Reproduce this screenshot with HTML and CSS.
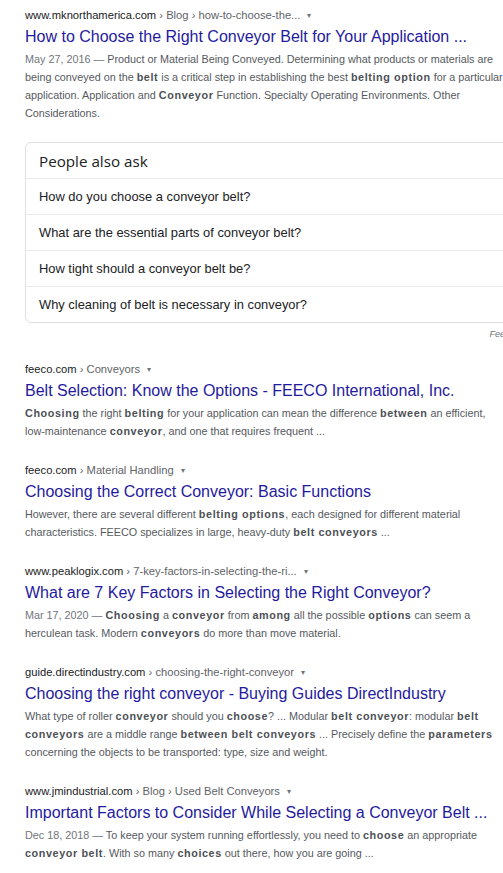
FILE: index.html
```html
<!DOCTYPE html>
<html>
<head>
<meta charset="utf-8">
<link rel="stylesheet" href="styles.css">
</head>
<body>
<main class="col">
  <div class="result first">
    <div class="cite"><span class="dom">www.mknorthamerica.com</span><span class="path"> › Blog › how-to-choose-the...</span><span class="arrow">▾</span></div>
    <a class="title">How to Choose the Right Conveyor Belt for Your Application ...</a>
    <div class="snip"><span class="date">May 27, 2016 — </span>Product or Material Being Conveyed. Determining what products or materials are being conveyed on the <b>belt</b> is a critical step in establishing the best <b>belting option</b> for a particular application. Application and <b>Conveyor</b> Function. Specialty Operating Environments. Other Considerations.</div>
  </div>

  <section class="paa">
    <div class="paa-head">People also ask</div>
    <div class="paa-q">How do you choose a conveyor belt?</div>
    <div class="paa-q">What are the essential parts of conveyor belt?</div>
    <div class="paa-q">How tight should a conveyor belt be?</div>
    <div class="paa-q">Why cleaning of belt is necessary in conveyor?</div>
  </section>
  <div class="feedback">Feedback</div>

  <div class="result">
    <div class="cite"><span class="dom">feeco.com</span><span class="path"> › Conveyors</span><span class="arrow">▾</span></div>
    <a class="title">Belt Selection: Know the Options - FEECO International, Inc.</a>
    <div class="snip"><b>Choosing</b> the right <b>belting</b> for your application can mean the difference <b>between</b> an efficient, <span class="nw">low-maintenance</span> <b>conveyor</b>, and one that requires frequent ...</div>
  </div>

  <div class="result">
    <div class="cite"><span class="dom">feeco.com</span><span class="path"> › Material Handling</span><span class="arrow">▾</span></div>
    <a class="title">Choosing the Correct Conveyor: Basic Functions</a>
    <div class="snip">However, there are several different <b>belting options</b>, each designed for different material characteristics. FEECO specializes in large, heavy-duty <b>belt conveyors</b> ...</div>
  </div>

  <div class="result">
    <div class="cite"><span class="dom">www.peaklogix.com</span><span class="path"> › 7-key-factors-in-selecting-the-ri...</span><span class="arrow">▾</span></div>
    <a class="title">What are 7 Key Factors in Selecting the Right Conveyor?</a>
    <div class="snip"><span class="date">Mar 17, 2020 — </span><b>Choosing</b> a <b>conveyor</b> from <b>among</b> all the possible <b>options</b> can seem a herculean task. Modern <b>conveyors</b> do more than move material.</div>
  </div>

  <div class="result">
    <div class="cite"><span class="dom">guide.directindustry.com</span><span class="path"> › choosing-the-right-conveyor</span><span class="arrow">▾</span></div>
    <a class="title">Choosing the right conveyor - Buying Guides DirectIndustry</a>
    <div class="snip">What type of roller <b>conveyor</b> should you <b>choose</b>? ... Modular <b>belt conveyor</b>: modular <b>belt conveyors</b> are a middle range <b>between belt conveyors</b> ... Precisely define the <b>parameters</b> concerning the objects to be transported: type, size and weight.</div>
  </div>

  <div class="result">
    <div class="cite"><span class="dom">www.jmindustrial.com</span><span class="path"> › Blog › Used Belt Conveyors</span><span class="arrow">▾</span></div>
    <a class="title">Important Factors to Consider While Selecting a Conveyor Belt ...</a>
    <div class="snip"><span class="date">Dec 18, 2018 — </span>To keep your system running effortlessly, you need to <b>choose</b> an appropriate <b>conveyor belt</b>. With so many <b>choices</b> out there, how you are going ...</div>
  </div>
</main>
</body>
</html>
```

FILE: styles.css
```css
html, body {
  margin: 0;
  padding: 0;
  background: #fff;
  overflow: hidden;
}
body {
  font-family: "Liberation Sans", Arial, sans-serif;
  color: #4d5156;
}
.col {
  width: 486px;
  padding: 8px 0 0 25px;
}
.result {
  margin-bottom: 23px;
}
.cite {
  font-size: 11.2px;
  line-height: 14px;
  color: #5f6368;
  white-space: nowrap;
}
.cite .dom {
  color: #202124;
}
.arrow {
  display: inline-block;
  margin-left: 7px;
  font-size: 8px;
  color: #70757a;
  vertical-align: 1px;
}
.title {
  display: block;
  margin-top: 3px;
  font-size: 16px;
  line-height: 22px;
  color: #1f1a9e;
  white-space: nowrap;
  text-decoration: none;
}
.snip {
  margin-top: 2px;
  font-size: 10.8px;
  line-height: 18px;
  color: #55595e;
}
.snip b {
  color: #4d5156;
  font-weight: bold;
  letter-spacing: 0.6px;
}
.nw {
  white-space: nowrap;
}
.date {
  color: #70757a;
}
.first {
  margin-bottom: 20px;
}
.paa {
  width: 520px;
  border: 1px solid #dfe1e5;
  border-radius: 6px;
  box-shadow: 0 0 1px rgba(0,0,0,0.05);
}
.paa-head {
  font-family: "Open Sans", Roboto, sans-serif;
  font-size: 15.2px;
  color: #202124;
  height: 35px;
  line-height: 36px;
  padding-left: 13px;
  border-bottom: 1px solid #ebebeb;
}
.paa-q {
  font-size: 12.9px;
  color: #202124;
  height: 35px;
  line-height: 35px;
  padding-left: 13px;
  border-bottom: 1px solid #ebebeb;
}
.paa-q:last-child {
  border-bottom: none;
}
.feedback {
  text-align: right;
  margin-right: -18px;
  font-size: 9px;
  font-style: italic;
  color: #70757a;
  line-height: 14px;
  padding-top: 4px;
  margin-bottom: 21px;
}
```
